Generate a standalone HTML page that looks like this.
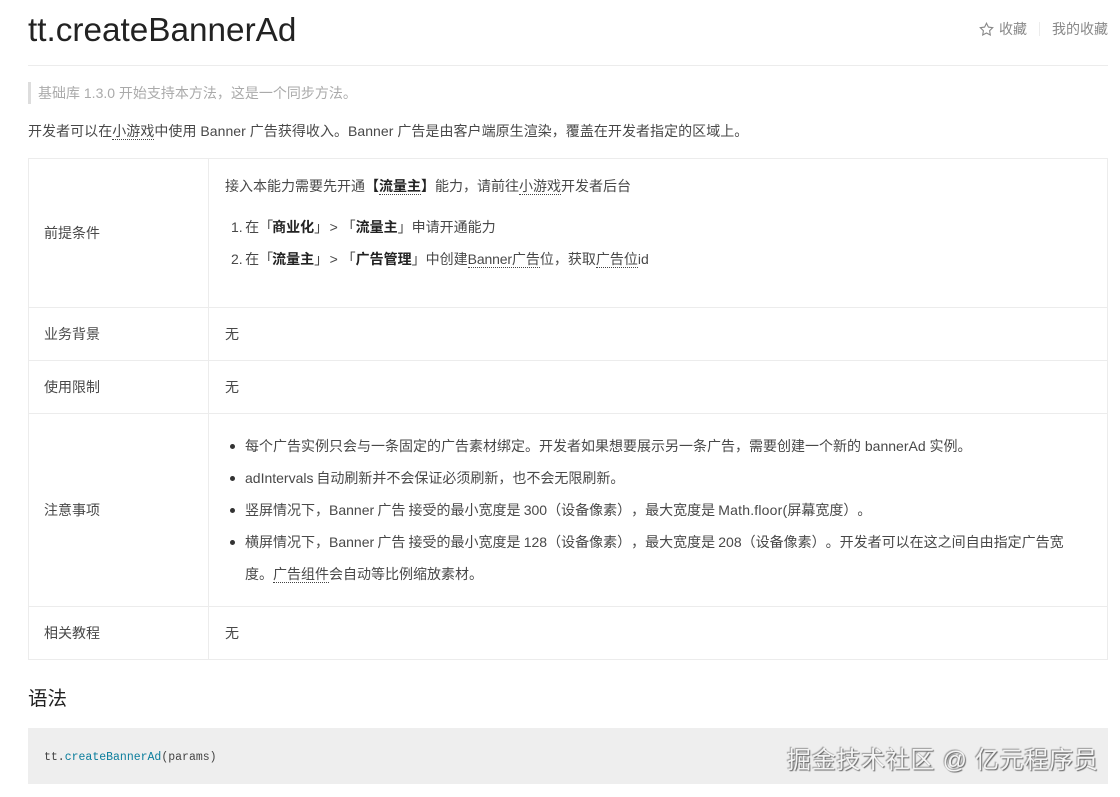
<!DOCTYPE html>
<html lang="zh-CN"><head><meta charset="utf-8"><title>tt.createBannerAd</title>
<style>
html,body{margin:0;padding:0;background:#fff}
body{width:1120px;height:797px;position:relative;overflow:hidden;font-family:"Liberation Sans","Noto Sans CJK SC",sans-serif;font-size:14px;color:#484848;text-spacing-trim:space-all}
.t{position:absolute;white-space:nowrap;line-height:20px}
.l{position:absolute;background:#ececec}
b{color:#222;font-weight:700}
u{text-decoration:none;border-bottom:1px dotted #444;padding-bottom:0}
.dot{position:absolute;width:5px;height:5px;border-radius:50%;background:#333;left:230px}
.n{word-spacing:-1.5px}
.g{margin-left:1.5px}
</style></head><body>
<div class="t" style="left:28px;top:12px;font-size:33.3px;line-height:38px;color:#222">tt.createBannerAd</div>
<svg style="position:absolute;left:979px;top:22px" width="15" height="15" viewBox="0 0 15 15"><path d="M7.500 1.200l1.900 3.900 4.300.6-3.100 3 .7 4.300-3.800-2-3.800 2 .7-4.300-3.100-3 4.300-.6z" fill="none" stroke="#888" stroke-width="1.100"/></svg>
<div class="t" style="left:999px;top:19px;color:#888">收藏</div>
<div class="l" style="left:1039px;top:22px;width:1px;height:14px"></div>
<div class="t" style="left:1052px;top:19px;color:#888">我的收藏</div>
<div class="l" style="left:28px;top:65px;width:1080px;height:1px"></div>
<div class="l" style="left:28px;top:82px;width:3px;height:22px;background:#ddd"></div>
<div class="t" style="left:38px;top:83px;color:#aaa">基础库 1.3.0 开始支持本方法，这是一个同步方法。</div>
<div class="t" style="left:28px;top:121px;letter-spacing:.04px">开发者可以在<u>小游戏</u>中使用 Banner 广告获得收入。Banner 广告是由客户端原生渲染，覆盖在开发者指定的区域上。</div>
<div class="l" style="left:28px;top:158px;width:1080px;height:1px"></div>
<div class="l" style="left:28px;top:307px;width:1080px;height:1px"></div>
<div class="l" style="left:28px;top:360px;width:1080px;height:1px"></div>
<div class="l" style="left:28px;top:413px;width:1080px;height:1px"></div>
<div class="l" style="left:28px;top:606px;width:1080px;height:1px"></div>
<div class="l" style="left:28px;top:659px;width:1080px;height:1px"></div>
<div class="l" style="left:28px;top:158px;width:1px;height:502px"></div>
<div class="l" style="left:208px;top:158px;width:1px;height:502px"></div>
<div class="l" style="left:1107px;top:158px;width:1px;height:502px"></div>
<div class="t" style="left:44px;top:223px">前提条件</div>
<div class="t" style="left:44px;top:324px">业务背景</div>
<div class="t" style="left:44px;top:377px">使用限制</div>
<div class="t" style="left:44px;top:500px">注意事项</div>
<div class="t" style="left:44px;top:623px">相关教程</div>
<div class="t" style="left:225px;top:176px">接入本能力需要先开通<b>【<u>流量主</u>】</b>能力，请前往<u>小游戏</u>开发者后台</div>
<div class="t" style="left:231px;top:217px"><span class="n">1. 在「</span><b style="margin-left:-1px">商业化</b>」<span class="g">&gt;</span> 「<b>流量主</b>」申请开通能力</div>
<div class="t" style="left:231px;top:249px"><span class="n">2. 在「</span><b style="margin-left:-1px">流量主</b>」<span class="g">&gt;</span> 「<b>广告管理</b>」中创建<u><span style="letter-spacing:-.15px">Banner</span>广告</u>位，获取<u>广告位</u>id</div>
<div class="t" style="left:225px;top:324px">无</div>
<div class="t" style="left:225px;top:377px">无</div>
<div class="dot" style="top:444px"></div><div class="dot" style="top:476px"></div><div class="dot" style="top:508px"></div><div class="dot" style="top:540px"></div>
<div class="t" style="left:245px;top:436px">每个广告实例只会与一条固定的广告素材绑定。开发者如果想要展示另一条广告，需要创建一个新的 bannerAd 实例。</div>
<div class="t" style="left:245px;top:468px;word-spacing:-1px">adIntervals 自动刷新并不会保证必须刷新，也不会无限刷新。</div>
<div class="t" style="left:245px;top:500px;word-spacing:-.7px">竖屏情况下，Banner 广告 接受的最小宽度是 300（设备像素），最大宽度是 <span style="letter-spacing:.2px">Math.floor(</span>屏幕宽度）。</div>
<div class="t" style="left:245px;top:532px;word-spacing:-.7px">横屏情况下，Banner 广告 接受的最小宽度是 128（设备像素），最大宽度是 208（设备像素）。开发者可以在这之间自由指定广告宽</div>
<div class="t" style="left:245px;top:564px">度。<u>广告组件</u>会自动等比例缩放素材。</div>
<div class="t" style="left:225px;top:623px">无</div>
<div class="t" style="left:28px;top:686px;font-size:19.5px;line-height:26px;color:#222">语法</div>
<div style="position:absolute;left:28px;top:728px;width:1080px;height:56px;background:#eee"></div>
<div class="t" style="left:44px;top:748px;font-family:'Liberation Mono',monospace;font-size:11.5px;color:#444">tt.<span style="color:#0a7d9c">createBannerAd</span>(params)</div>
<div class="t" style="left:787px;top:745px;font-size:24px;line-height:32px;letter-spacing:.7px;color:#f4f4f4;text-shadow:1px 1px 1px #666,-1px -1px 1px #999">掘金技术社区 @ 亿元程序员</div>
</body></html>
